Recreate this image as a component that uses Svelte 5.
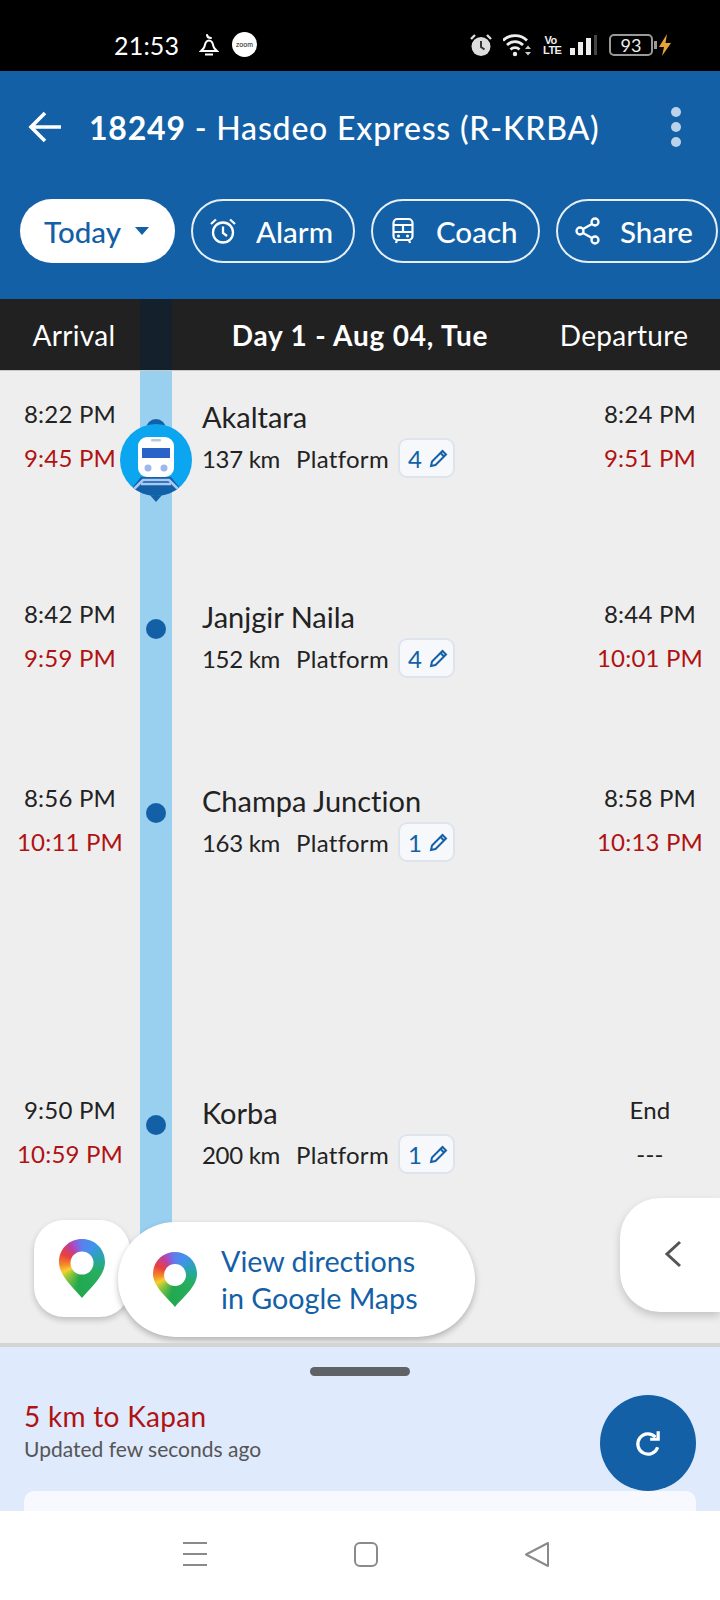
<script>
  const stops = [
    { arr: "8:22 PM", arrLate: "9:45 PM", dep: "8:24 PM", depLate: "9:51 PM", name: "Akaltara", km: 137, pf: 4, height: 200, current: true },
    { arr: "8:42 PM", arrLate: "9:59 PM", dep: "8:44 PM", depLate: "10:01 PM", name: "Janjgir Naila", km: 152, pf: 4, height: 184 },
    { arr: "8:56 PM", arrLate: "10:11 PM", dep: "8:58 PM", depLate: "10:13 PM", name: "Champa Junction", km: 163, pf: 1, height: 312 },
    { arr: "9:50 PM", arrLate: "10:59 PM", dep: "End", depLate: "---", name: "Korba", km: 200, pf: 1, height: 100, last: true },
  ];
</script>

{#snippet pin(cls)}
  <div class="pin {cls}"><span class="pin-hole"></span></div>
{/snippet}

<div class="phone">
  <div class="statusbar">
    <span class="clock">21:53</span>
    <svg class="st-bell" width="20" height="22" viewBox="0 0 20 22" fill="none" stroke="#fff" stroke-width="2">
      <path d="M8 1c.3 2 1.500 3 4 3" stroke-linecap="round" />
      <path d="M10 6.500c2.800 0 4 3 4.500 6 .3 1.800 2 3.200 3.500 4.500H2c1.500-1.300 3.200-2.700 3.500-4.500.5-3 1.700-6 4.500-6z" />
      <path d="M6 20.500h8" />
    </svg>
    <span class="zoom-badge">zoom</span>
    <span class="st-spacer"></span>
    <svg class="st-alarm" width="22" height="24" viewBox="0 0 22 24">
      <circle cx="11" cy="13.500" r="9.500" fill="#ddd" />
      <path d="M11 8v6l3.500 2.500" stroke="#333" stroke-width="2" fill="none" />
      <path d="M1 6 5 2M21 6l-4-4" stroke="#ddd" stroke-width="2.400" />
    </svg>
    <svg class="st-wifi" width="28" height="24" viewBox="0 0 28 24" fill="none" stroke="#eee" stroke-width="2.800">
      <path d="M0 7.500c6.500-6.500 17.500-6.500 24 0M4 12c4.500-4.500 11.500-4.500 16 0M7.500 16.500c2.500-2.500 6.500-2.500 9 0" />
      <circle cx="12" cy="21" r="2.200" fill="#eee" stroke="none" />
      <path d="M22 16h6l-3-3.500zM22 19h6l-3 3.500z" fill="#ccc" stroke="none" />
    </svg>
    <span class="st-volte">Vo<br />LTE</span>
    <div class="st-bars">
      <i style="height:7px"></i><i style="height:13px"></i><i style="height:17px"></i><i class="dim" style="height:20px"></i>
    </div>
    <div class="st-battery"><span>93</span></div>
    <svg class="st-bolt" width="12" height="22" viewBox="0 0 12 22"><path d="M8 0 0 13h5l-2 9 9-13H6.500z" fill="#e9a23b" /></svg>
  </div>

  <header class="appbar">
    <div class="titlerow">
      <svg class="back" width="34" height="32" viewBox="0 0 34 32" fill="none" stroke="#fff" stroke-width="3.600">
        <path d="M33 16H3M17 2 3 16l14 14" />
      </svg>
      <h1><b>18249</b> - Hasdeo Express (R-KRBA)</h1>
      <div class="more"><i></i><i></i><i></i></div>
    </div>
    <div class="chips">
      <button class="chip today">Today <span class="caret"></span></button>
      <button class="chip alarm">
        <svg width="28" height="28" viewBox="0 0 28 28" fill="none" stroke="#fff" stroke-width="2.300">
          <circle cx="14" cy="15.500" r="10" />
          <path d="M14 9.500v6.500l4 3M2 7l5-4.500M26 7l-5-4.500" />
        </svg>
        Alarm
      </button>
      <button class="chip coach">
        <svg width="22" height="28" viewBox="0 0 22 28" fill="none" stroke="#fff" stroke-width="2.200">
          <rect x="1.500" y="2" width="19" height="21" rx="4" />
          <path d="M1.500 8h19M1.500 15h19M11 8v7" />
          <circle cx="6.500" cy="19" r="1.500" fill="#fff" stroke="none" />
          <circle cx="15.500" cy="19" r="1.500" fill="#fff" stroke="none" />
          <path d="M5 23l-1 3M17 23l1 3" />
        </svg>
        Coach
      </button>
      <button class="chip share">
        <svg width="26" height="28" viewBox="0 0 26 28" fill="none" stroke="#fff" stroke-width="2.300">
          <circle cx="20" cy="5" r="3.500" /><circle cx="5" cy="14" r="3.500" /><circle cx="20" cy="23" r="3.500" />
          <path d="M8 12 17 7M8 16l9 5" />
        </svg>
        Share
      </button>
    </div>
  </header>

  <div class="thead">
    <span class="th-time">Arrival</span>
    <span class="th-day">Day 1 - Aug 04, Tue</span>
    <span class="th-time">Departure</span>
  </div>

  <main class="timeline">
    {#each stops as s}
      <div class="row" style="height:{s.height}px">
        <div class="time">
          <div>{s.arr}</div>
          <div class="late">{s.arrLate}</div>
        </div>
        <div class="node">
          <span class="dot"></span>
          {#if s.current}
            <svg class="marker" width="72" height="80" viewBox="0 0 72 80">
              <defs>
                <clipPath id="disc"><circle cx="36" cy="37" r="36" /></clipPath>
              </defs>
              <path d="M29 71h14l-7 8z" fill="#1360a6" />
              <circle cx="36" cy="37" r="36" fill="#0ca5ef" />
              <g clip-path="url(#disc)">
                <path d="M21 54h30l9 11 12 15H0l12-15z" fill="#1360a6" />
                <path d="M14 66l9-9h26l9 9M21 61h30" stroke="#a9c8f3" stroke-width="2.600" fill="none" />
              </g>
              <rect x="18" y="14" width="36" height="40" rx="9" fill="#fff" />
              <rect x="31" y="16" width="10" height="2.500" rx="1" fill="#b5c8ea" />
              <rect x="22" y="25" width="28" height="10" fill="#2a63c8" />
              <circle cx="28" cy="45" r="3.500" fill="#9db8ec" />
              <circle cx="44" cy="45" r="3.500" fill="#9db8ec" />
            </svg>
          {/if}
        </div>
        <div class="station">
          <div class="name">{s.name}</div>
          <div class="meta">
            <span class="km">{s.km} km</span>
            <span class="pf-label">Platform</span>
            <span class="pf">
              {s.pf}
              <svg width="19" height="19" viewBox="0 0 19 19" fill="none" stroke="#1360a6" stroke-width="2">
                <path d="M2 17l1-4.500L13.500 2 17 5.500 6.500 16z" />
                <path d="M11.500 4l3.500 3.500" />
              </svg>
            </span>
          </div>
        </div>
        <div class="time dep" class:last={s.last}>
          <div>{s.dep}</div>
          <div class:late={!s.last}>{s.depLate}</div>
        </div>
      </div>
    {/each}

    <div class="map-btn">{@render pin("pin-lg")}</div>
    <div class="map-pill">
      {@render pin("pin-md")}
      <span>View directions<br />in Google Maps</span>
    </div>
    <div class="collapse">
      <svg width="18" height="28" viewBox="0 0 18 28" fill="none" stroke="#555" stroke-width="3">
        <path d="M16 2 3 14l13 12" />
      </svg>
    </div>
  </main>

  <section class="sheet">
    <div class="handle"></div>
    <div class="sheet-body">
      <div>
        <div class="distance">5 km to Kapan</div>
        <div class="updated">Updated few seconds ago</div>
      </div>
      <button class="fab" aria-label="Refresh">
        <svg width="30" height="30" viewBox="0 0 28 28" fill="none" stroke="#fff" stroke-width="3">
          <path d="M21 8.500A9.500 9.500 0 1 0 23 18" />
          <path d="M23.500 3v7.500H16" stroke-width="3" />
        </svg>
      </button>
    </div>
    <div class="sheet-card"></div>
  </section>

  <nav class="navbar">
    <svg width="26" height="26" viewBox="0 0 26 26" stroke="#8a8a8a" stroke-width="2"><path d="M1 2h24M1 13h24M1 24h24" /></svg>
    <svg width="26" height="26" viewBox="0 0 26 26" fill="none" stroke="#8a8a8a" stroke-width="2"><rect x="2" y="2" width="22" height="23" rx="5" /></svg>
    <svg width="26" height="26" viewBox="0 0 26 26" fill="none" stroke="#8a8a8a" stroke-width="2" stroke-linejoin="round"><path d="M24 2v23L2 13.500z" /></svg>
  </nav>
</div>

<style>
  :global(body) {
    margin: 0;
    background: #fff;
  }

  .phone {
    width: 720px;
    height: 1600px;
    display: flex;
    flex-direction: column;
    overflow: hidden;
    font-family: Lato, "Noto Sans", sans-serif;
    font-variant-ligatures: none;
    color: #222;
  }

  .statusbar {
    height: 71px;
    flex: none;
    box-sizing: border-box;
    background: #000;
    color: #fff;
    display: flex;
    align-items: center;
    padding: 18px 49px 0 114px;
  }
  .clock {
    font-size: 25px;
    letter-spacing: 0.2px;
    width: 85px;
  }
  .zoom-badge {
    width: 25px;
    height: 25px;
    margin-left: 13px;
    border-radius: 50%;
    background: #fff;
    color: #111;
    font-size: 7px;
    line-height: 25px;
    text-align: center;
  }
  .st-spacer {
    flex: 1;
  }
  .st-wifi {
    margin-left: 11px;
  }
  .st-volte {
    margin-left: 12px;
    width: 15px;
    font: bold 11px/10px "Liberation Sans", sans-serif;
    letter-spacing: -0.5px;
    color: #eee;
    text-align: center;
  }
  .st-bars {
    display: flex;
    align-items: flex-end;
    gap: 3px;
    margin-left: 12px;
    height: 20px;
  }
  .st-bars i {
    width: 5px;
    background: #eee;
  }
  .st-bars i.dim {
    width: 3px;
    background: #444;
  }
  .st-battery {
    position: relative;
    width: 40px;
    height: 18px;
    margin-left: 12px;
    border: 2px solid #999;
    border-radius: 5px;
    color: #eee;
    font-size: 18px;
    line-height: 18px;
    text-align: center;
  }
  .st-battery::after {
    content: "";
    position: absolute;
    right: -6px;
    top: 5px;
    width: 3px;
    height: 8px;
    background: #999;
  }
  .st-bolt {
    margin-left: 6px;
  }

  .appbar {
    height: 228px;
    flex: none;
    box-sizing: border-box;
    background: #1360a6;
    padding-top: 36px;
  }
  .titlerow {
    display: flex;
    align-items: center;
    height: 40px;
    padding-left: 28px;
  }
  .titlerow h1 {
    margin: 0 0 0 27px;
    font-size: 32px;
    font-weight: 500;
    color: #fff;
    white-space: nowrap;
    letter-spacing: 0.8px;
  }
  .more {
    margin-left: auto;
    margin-right: 39px;
    display: flex;
    flex-direction: column;
    gap: 5px;
  }
  .more i {
    width: 10px;
    height: 10px;
    border-radius: 50%;
    background: #bcd2ea;
  }
  .chips {
    display: flex;
    gap: 16px;
    margin-top: 52px;
    padding-left: 20px;
  }
  .chip {
    height: 64px;
    box-sizing: border-box;
    flex: none;
    display: flex;
    align-items: center;
    gap: 19px;
    padding: 0 16px;
    border: 2px solid #e6eef6;
    border-radius: 32px;
    background: none;
    color: #fff;
    font: 500 29.500px Lato, sans-serif;
  }
  .chip svg {
    flex: none;
  }
  .chip.today {
    background: #fff;
    color: #1360a6;
    padding: 0 24px;
    gap: 14px;
    border: none;
    width: 155px;
  }
  .chip.alarm {
    width: 164px;
  }
  .chip.coach {
    width: 169px;
    padding-left: 19px;
    gap: 22px;
  }
  .chip.share {
    width: 162px;
    padding-left: 17px;
  }
  .caret {
    width: 0;
    height: 0;
    border: 7px solid transparent;
    border-top: 8px solid #1360a6;
    border-bottom: 0;
  }

  .thead {
    position: relative;
    height: 72px;
    flex: none;
    display: grid;
    grid-template-columns: 148px 380px 192px;
    align-items: center;
    text-align: center;
    background: #212121;
    color: #fff;
    font-size: 28px;
    letter-spacing: 0.3px;
    border-bottom: 1px solid #c8c8c8;
    box-sizing: border-box;
  }
  .thead::before {
    content: "";
    position: absolute;
    left: 140px;
    top: 0;
    bottom: 0;
    width: 32px;
    background: #14212d;
  }
  .th-day {
    font-weight: 700;
    letter-spacing: 0.8px;
    padding-left: 44px;
  }

  .timeline {
    position: relative;
    flex: 1;
    box-sizing: border-box;
    padding-top: 24px;
    background: #eee;
    border-bottom: 4px solid #d4d4d4;
    overflow: hidden;
  }
  .timeline::before {
    content: "";
    position: absolute;
    left: 140px;
    top: 0;
    width: 32px;
    height: 890px;
    background: #99cfef;
  }
  .row {
    position: relative;
    display: grid;
    grid-template-columns: 140px 32px 408px 140px;
  }
  .time {
    margin-top: -3px;
    font-size: 24px;
    letter-spacing: 0.2px;
    line-height: 44px;
    text-align: center;
    color: #222;
  }
  .late {
    color: #b01212;
  }
  .node {
    position: relative;
  }
  .dot {
    position: absolute;
    left: 6px;
    top: 24px;
    width: 20px;
    height: 20px;
    border-radius: 50%;
    background: #1360a6;
  }
  .marker {
    position: absolute;
    left: -20px;
    top: 28px;
  }
  .station {
    padding-left: 30px;
  }
  .name {
    font-size: 29px;
    line-height: 44px;
    color: #222;
  }
  .meta {
    display: flex;
    align-items: center;
    height: 44px;
    margin-top: -3px;
    font-size: 24px;
    gap: 9px;
  }
  .km {
    margin-right: 7px;
    letter-spacing: -0.3px;
  }
  .pf-label {
    letter-spacing: 0.3px;
  }
  .pf {
    display: flex;
    align-items: center;
    gap: 7px;
    width: 57px;
    height: 40px;
    box-sizing: border-box;
    padding-left: 8px;
    background: #f6f8fc;
    border: 2px solid #dfe4ec;
    border-radius: 9px;
    color: #1360a6;
    font-size: 24px;
  }

  .map-btn {
    position: absolute;
    left: 34px;
    top: 849px;
    width: 96px;
    height: 97px;
    border-radius: 30px;
    background: #fff;
    box-shadow: 0 3px 6px rgba(0, 0, 0, 0.2);
    display: flex;
    align-items: center;
    justify-content: center;
  }
  .map-pill {
    position: absolute;
    left: 118px;
    top: 851px;
    width: 357px;
    height: 115px;
    box-sizing: border-box;
    padding-left: 35px;
    border-radius: 58px;
    background: #fff;
    box-shadow: 0 3px 6px rgba(0, 0, 0, 0.25);
    display: flex;
    align-items: center;
    gap: 24px;
    color: #1360a6;
    font-size: 28.700px;
    line-height: 37px;
  }
  .collapse {
    position: absolute;
    right: 0;
    top: 827px;
    width: 100px;
    height: 114px;
    box-sizing: border-box;
    padding: 42px 0 0 44px;
    border-radius: 40px 0 0 40px;
    background: #fff;
    box-shadow: 0 4px 8px rgba(0, 0, 0, 0.18);
  }
  .pin {
    position: relative;
    flex: none;
    background: conic-gradient(from 0deg at 50% 41%, #5a80ee 0deg, #3f94e8 35deg, #25a8a0 80deg, #27ae60 120deg, #22a850 190deg, #8fc63c 225deg, #f5d02f 245deg, #f58a2a 265deg, #e9403c 295deg, #c03f9c 325deg, #8a60dc 345deg, #5a80ee 360deg);
  }
  .pin-lg {
    width: 46px;
    height: 59px;
    clip-path: path("M23 0C36 0 46 10 46 23 46 37 31 49 23 59 15 49 0 37 0 23 0 10 10 0 23 0z");
  }
  .pin-md {
    width: 44px;
    height: 55px;
    clip-path: path("M22 0C34 0 44 9 44 22 44 35 29 46 22 55 15 46 0 35 0 22 0 9 10 0 22 0z");
  }
  .pin-hole {
    position: absolute;
    left: 50%;
    top: 41%;
    width: 50%;
    aspect-ratio: 1;
    border-radius: 50%;
    background: #fff;
    transform: translate(-50%, -50%);
  }

  .sheet {
    position: relative;
    height: 164px;
    flex: none;
    box-sizing: border-box;
    background: #dfeafc;
    padding: 20px 24px 0;
    overflow: hidden;
  }
  .handle {
    width: 100px;
    height: 9px;
    margin: 0 auto;
    border-radius: 5px;
    background: #5f6368;
  }
  .sheet-body {
    display: flex;
    justify-content: space-between;
    margin-top: 19px;
  }
  .distance {
    font-size: 28px;
    letter-spacing: 0.3px;
    line-height: 42px;
    color: #b01212;
  }
  .updated {
    font-size: 21px;
    line-height: 24px;
    color: #555;
  }
  .fab {
    width: 96px;
    height: 96px;
    flex: none;
    border: none;
    border-radius: 50%;
    background: #1360a6;
    display: flex;
    align-items: center;
    justify-content: center;
    position: relative;
    z-index: 1;
  }
  .sheet-card {
    position: absolute;
    left: 24px;
    right: 24px;
    top: 144px;
    height: 40px;
    border-radius: 10px;
    background: #f8f9fe;
  }

  .navbar {
    height: 89px;
    flex: none;
    box-sizing: border-box;
    background: #fff;
    display: flex;
    align-items: center;
    gap: 145px;
    padding: 0 0 3px 182px;
  }
</style>
